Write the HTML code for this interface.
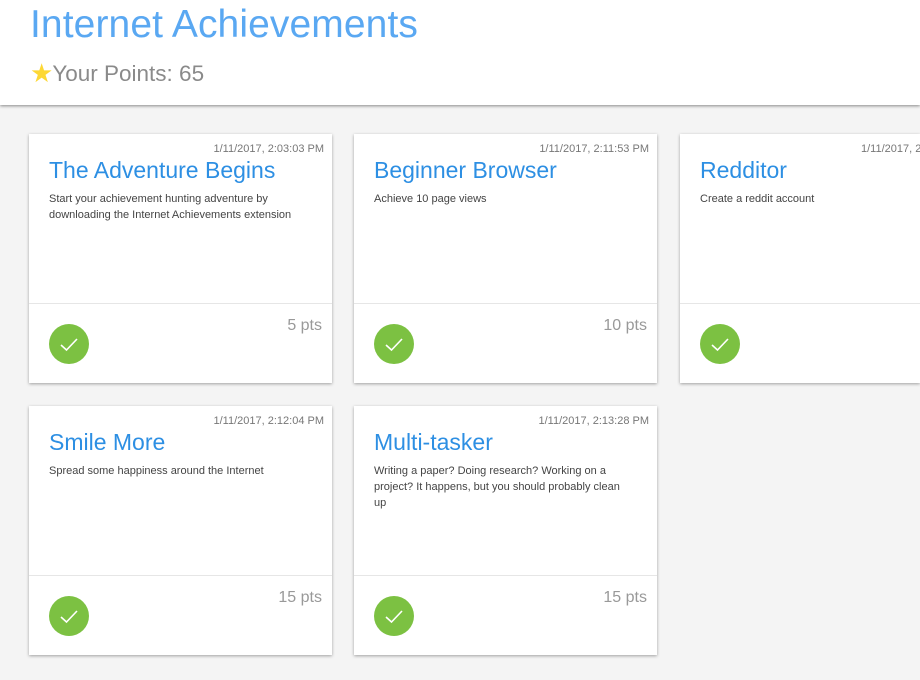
<!DOCTYPE html>
<html><head><style>
*{margin:0;padding:0;box-sizing:border-box}
body{width:920px;height:680px;overflow:hidden;background:#f4f4f4;font-family:"Liberation Sans",sans-serif;position:relative}
.hdr{position:absolute;left:0;top:0;width:920px;height:105px;background:#fff;box-shadow:0 1px 3px rgba(0,0,0,.45)}
.t{position:absolute;left:30px;top:3px;font-size:39px;font-weight:300;color:#5aa8f2;letter-spacing:0.1px;white-space:nowrap}
.p{position:absolute;left:30px;top:58px;font-size:22.5px;color:#8a8a8a;white-space:nowrap}
.p span{color:#fdd835;font-size:26px;vertical-align:-1px;margin-right:-1px}
.card{position:absolute;width:303px;height:249px;background:#fff;box-shadow:0 1px 3px rgba(0,0,0,.35);overflow:hidden}
.d{position:absolute;right:8px;top:9px;font-size:11px;color:#777;white-space:nowrap}
.ct{position:absolute;left:20px;top:23px;font-size:23px;color:#2d8fe3;white-space:nowrap}
.ds{position:absolute;left:20px;top:57px;width:255px;font-size:11px;line-height:16px;color:#444}
.hr{position:absolute;left:0;right:0;top:169px;border-top:1px solid #e6e6e6}
.pt{position:absolute;right:10px;top:183px;font-size:16px;color:#999}
.ck{position:absolute;left:20px;top:190px;width:40px;height:40px;border-radius:50%;background:#7cc142}
</style></head><body>
<div class="hdr"><div class="t">Internet Achievements</div><div class="p"><span>★</span>Your Points: 65</div></div>

<div class="card" style="left:29px;top:134px"><div class="d">1/11/2017, 2:03:03 PM</div><div class="ct">The Adventure Begins</div><div class="ds">Start your achievement hunting adventure by downloading the Internet Achievements extension</div><div class="hr"></div><div class="pt">5 pts</div><div class="ck"><svg width="40" height="40"><path d="M12 21 L17.5 26 L28 15" stroke="#fff" stroke-width="1.6" fill="none"/></svg></div></div>

<div class="card" style="left:354px;top:134px"><div class="d">1/11/2017, 2:11:53 PM</div><div class="ct">Beginner Browser</div><div class="ds">Achieve 10 page views</div><div class="hr"></div><div class="pt">10 pts</div><div class="ck"><svg width="40" height="40"><path d="M12 21 L17.5 26 L28 15" stroke="#fff" stroke-width="1.6" fill="none"/></svg></div></div>

<div class="card" style="left:680px;top:134px;width:240px"><div class="d" style="right:auto;left:181px">1/11/2017, 2:14:01 PM</div><div class="ct">Redditor</div><div class="ds">Create a reddit account</div><div class="hr"></div><div class="ck"><svg width="40" height="40"><path d="M12 21 L17.5 26 L28 15" stroke="#fff" stroke-width="1.6" fill="none"/></svg></div></div>

<div class="card" style="left:29px;top:406px"><div class="d">1/11/2017, 2:12:04 PM</div><div class="ct">Smile More</div><div class="ds">Spread some happiness around the Internet</div><div class="hr"></div><div class="pt">15 pts</div><div class="ck"><svg width="40" height="40"><path d="M12 21 L17.5 26 L28 15" stroke="#fff" stroke-width="1.6" fill="none"/></svg></div></div>

<div class="card" style="left:354px;top:406px"><div class="d">1/11/2017, 2:13:28 PM</div><div class="ct">Multi-tasker</div><div class="ds" style="width:250px">Writing a paper? Doing research? Working on a project? It happens, but you should probably clean up</div><div class="hr"></div><div class="pt">15 pts</div><div class="ck"><svg width="40" height="40"><path d="M12 21 L17.5 26 L28 15" stroke="#fff" stroke-width="1.6" fill="none"/></svg></div></div>
</body></html>
